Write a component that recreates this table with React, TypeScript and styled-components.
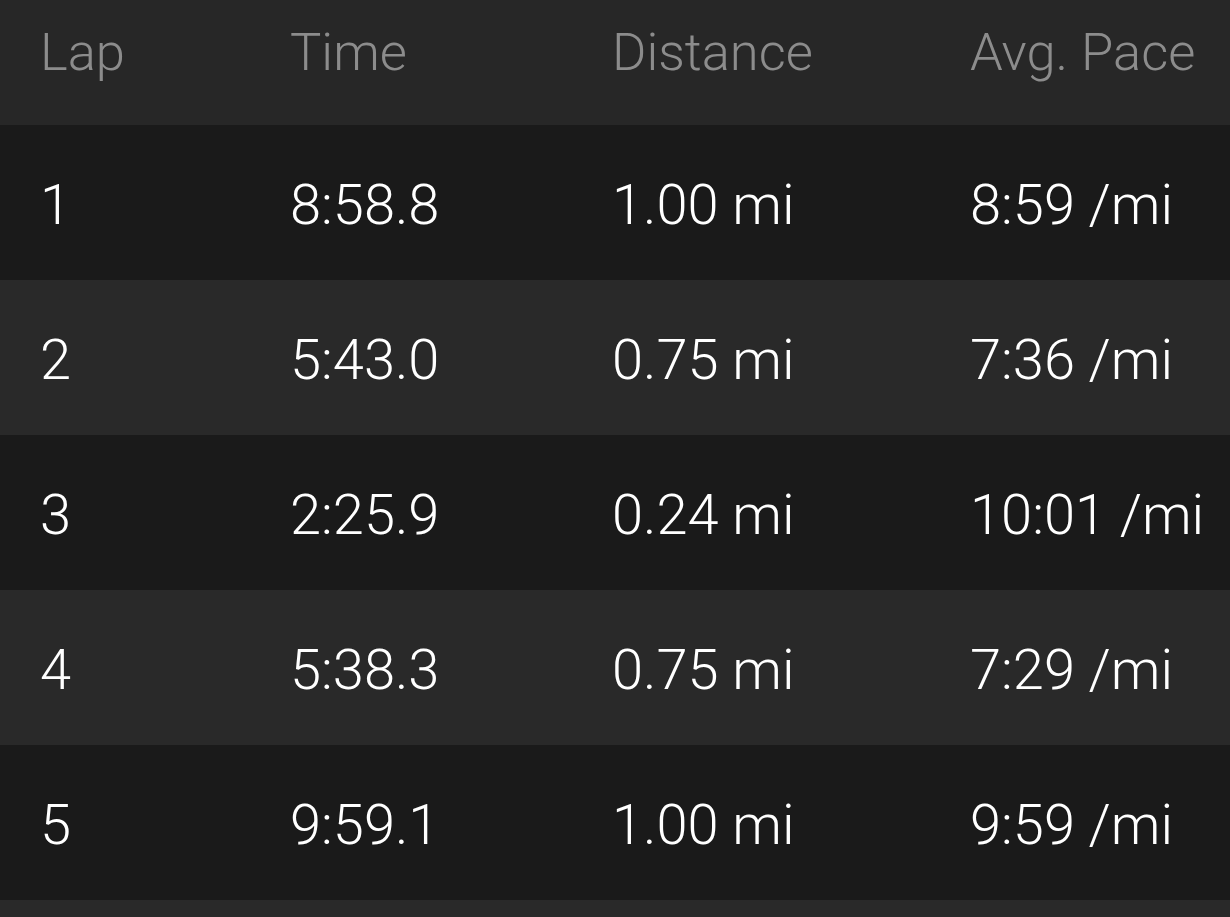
import { FC } from 'react'
import styled, { createGlobalStyle } from 'styled-components'

const GlobalStyle = createGlobalStyle`
  html, body {
    margin: 0;
    padding: 0;
    background: #1a1a1a;
  }
  body {
    font-family: Roboto, "Noto Sans", sans-serif;
    overflow: hidden;
  }
`

type Lap = {
  lap: number
  time: string
  distance: string
  pace: string
}

const laps: Lap[] = [
  { lap: 1, time: '8:58.8', distance: '1.00 mi', pace: '8:59 /mi' },
  { lap: 2, time: '5:43.0', distance: '0.75 mi', pace: '7:36 /mi' },
  { lap: 3, time: '2:25.9', distance: '0.24 mi', pace: '10:01 /mi' },
  { lap: 4, time: '5:38.3', distance: '0.75 mi', pace: '7:29 /mi' },
  { lap: 5, time: '9:59.1', distance: '1.00 mi', pace: '9:59 /mi' },
  { lap: 6, time: '', distance: '', pace: '' },
]

const Table = styled.div`
  width: 1230px;
  display: flex;
  flex-direction: column;
`

const Row = styled.div<{ $shade: 'head' | 'dark' | 'light' }>`
  display: grid;
  grid-template-columns: 250px 322px 358px 1fr;
  padding-left: 40px;
  height: ${p => (p.$shade === 'head' ? '125px' : '155px')};
  align-items: ${p => (p.$shade === 'head' ? 'start' : 'center')};
  padding-top: ${p => (p.$shade === 'head' ? '17px' : '0')};
  box-sizing: border-box;
  background: ${p => (p.$shade === 'dark' ? '#1a1a1a' : p.$shade === 'light' ? '#292929' : '#272727')};
`

const HeadCell = styled.div`
  font-size: 52.5px;
  font-weight: 300;
  color: #8c8c8c;
  line-height: 70px;
  white-space: nowrap;
`

const Cell = styled.div`
  font-size: 56px;
  font-weight: 300;
  color: #ffffff;
  white-space: nowrap;
  padding-top: 4px;
`

const App: FC = () => {
  return (
    <>
      <GlobalStyle />
      <Table>
        <Row $shade="head">
          <HeadCell>Lap</HeadCell>
          <HeadCell>Time</HeadCell>
          <HeadCell>Distance</HeadCell>
          <HeadCell>Avg. Pace</HeadCell>
        </Row>
        {laps.map((l, i) => (
          <Row key={l.lap} $shade={i % 2 === 0 ? 'dark' : 'light'}>
            <Cell>{l.time ? l.lap : ''}</Cell>
            <Cell>{l.time}</Cell>
            <Cell>{l.distance}</Cell>
            <Cell>{l.pace}</Cell>
          </Row>
        ))}
      </Table>
    </>
  )
}

export default App
